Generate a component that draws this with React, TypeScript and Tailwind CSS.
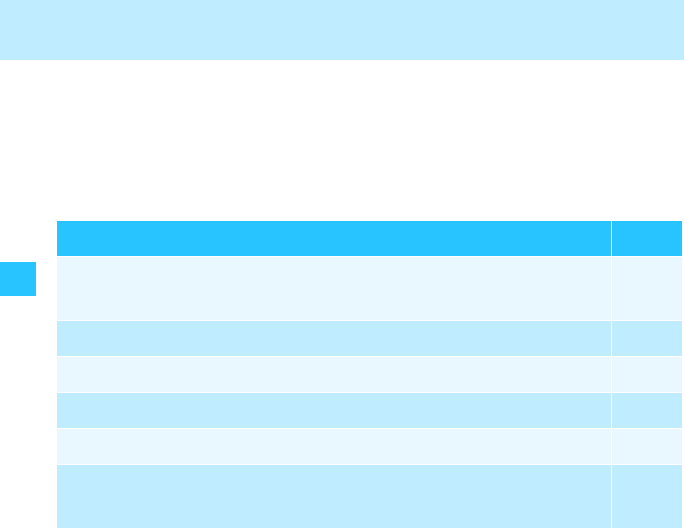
import React from 'react';

const rows = [
  { h: 'h-[63px]', bg: 'bg-[#e9f7fe]' },
  { h: 'h-[35px]', bg: 'bg-[#bfedff]' },
  { h: 'h-[35px]', bg: 'bg-[#e9f7fe]' },
  { h: 'h-[35px]', bg: 'bg-[#bfedff]' },
  { h: 'h-[35px]', bg: 'bg-[#e9f7fe]' },
  { h: 'h-[63px]', bg: 'bg-[#bfedff]' },
];

const App: React.FC = () => {
  return (
    <div className="w-[684px] h-[529px] overflow-hidden bg-white font-['Liberation_Sans',sans-serif]">
      <header className="h-[60px] bg-[#bfedff]" />

      <div className="flex items-start mt-[161px]">
        {/* side tab */}
        <div className="w-[36px] h-[34px] mt-[41px] bg-[#27c4ff] shrink-0" />

        <div className="ml-[21px] w-[625px] flex flex-col gap-px">
          <div className="flex gap-px h-[35px]">
            <div className="w-[554px] bg-[#27c4ff]" />
            <div className="flex-1 bg-[#27c4ff]" />
          </div>
          {rows.map((r, i) => (
            <div key={i} className={`flex gap-px ${r.h}`}>
              <div className={`w-[554px] ${r.bg}`} />
              <div className={`flex-1 ${r.bg}`} />
            </div>
          ))}
        </div>
      </div>
    </div>
  );
};

export default App;
